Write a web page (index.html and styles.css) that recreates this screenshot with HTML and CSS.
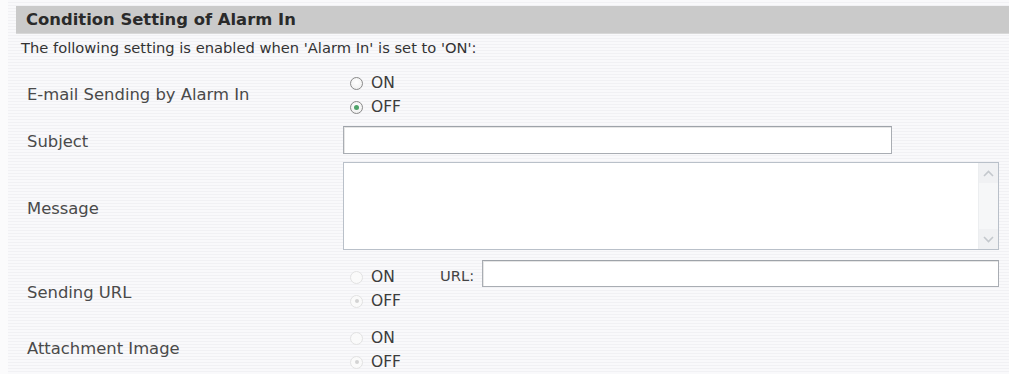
FILE: index.html
```html
<!DOCTYPE html>
<html>
<head>
<meta charset="utf-8">
<link rel="stylesheet" href="styles.css">
</head>
<body>
<div class="page">
  <div class="section-title">Condition Setting of Alarm In</div>
  <div class="note">The following setting is enabled when 'Alarm In' is set to 'ON':</div>

  <div class="row row-email">
    <div class="label">E-mail Sending by Alarm In</div>
    <div class="control">
      <div class="radios">
        <label class="radio"><span class="dot"></span><span>ON</span></label>
        <label class="radio"><span class="dot checked"></span><span>OFF</span></label>
      </div>
    </div>
  </div>

  <div class="row row-subject">
    <div class="label">Subject</div>
    <div class="control">
      <div class="input subject"></div>
    </div>
  </div>

  <div class="row row-message">
    <div class="label">Message</div>
    <div class="control">
      <div class="textarea">
        <div class="ta-body"></div>
        <div class="scrollbar">
          <div class="sb-btn"><svg width="11" height="7" viewBox="0 0 11 7"><path d="M1 6 L5.5 1.5 L10 6" fill="none" stroke="#c4c8cd" stroke-width="1.6"/></svg></div>
          <div class="sb-track"></div>
          <div class="sb-btn"><svg width="11" height="7" viewBox="0 0 11 7"><path d="M1 1 L5.5 5.5 L10 1" fill="none" stroke="#c4c8cd" stroke-width="1.6"/></svg></div>
        </div>
      </div>
    </div>
  </div>

  <div class="row row-url">
    <div class="label">Sending URL</div>
    <div class="control url-control">
      <div class="radios fixed">
        <label class="radio"><span class="dot disabled"></span><span>ON</span></label>
        <label class="radio"><span class="dot disabled checked-dis"></span><span>OFF</span></label>
      </div>
      <div class="url-label">URL:</div>
      <div class="input url"></div>
    </div>
  </div>

  <div class="row row-attach">
    <div class="label">Attachment Image</div>
    <div class="control">
      <div class="radios">
        <label class="radio"><span class="dot disabled"></span><span>ON</span></label>
        <label class="radio"><span class="dot disabled checked-dis"></span><span>OFF</span></label>
      </div>
    </div>
  </div>
</div>
</body>
</html>
```

FILE: styles.css
```css
html, body {
  margin: 0;
  padding: 0;
}
body {
  background: #fbfbfc;
  font-family: "DejaVu Sans", Verdana, sans-serif;
  color: #444;
  width: 1009px;
  height: 374px;
  overflow: hidden;
}
.page {
  padding-top: 6px;
  background-color: #f7f7f9;
  background-image: repeating-linear-gradient(to bottom, #f9f9fb 0px, #f9f9fb 2px, #f1f1f4 2px, #f1f1f4 3px);
  height: 368px;
  margin-left: 8px;
}
.section-title {
  margin-left: 8px;
  height: 27px;
  background: #cacaca;
  border-bottom: 1px solid #d8d8d8;
  display: flex;
  align-items: center;
  padding-left: 10px;
  font-weight: bold;
  font-size: 16.4px;
  color: #2a2a2a;
}
.note {
  padding-left: 13px;
  height: 27px;
  line-height: 27px;
  font-size: 14.7px;
  color: #333;
}
.row {
  display: grid;
  grid-template-columns: 335px 1fr;
}
.label {
  padding-left: 19px;
  font-size: 16.4px;
  color: #4a4a4a;
  align-self: center;
}
.control {
  padding-right: 10px;
}
.row-email { height: 60px; }
.row-email .label { padding-top: 6px; }
.row-email .radios { padding-top: 10px; }

.row-subject { height: 37px; }
.row-subject .label { padding-top: 4px; }
.row-subject .input { margin-top: 5px; }

.row-message { height: 98px; }
.row-message .label { padding-top: 2px; }
.row-message .textarea { margin-top: 4px; }

.row-url { height: 58px; }
.row-url .label { padding-top: 14px; }
.row-url .radios { padding-top: 9px; }

.row-attach { height: 60px; }
.row-attach .label { padding-top: 8px; }
.row-attach .radios { padding-top: 12px; }

.radios {
  display: flex;
  flex-direction: column;
}
.radios.fixed {
  width: 97px;
  flex: none;
}
.radio {
  display: flex;
  align-items: center;
  height: 24px;
  padding-left: 7px;
  gap: 8px;
  font-family: "DejaVu Sans", Tahoma, sans-serif;
  font-size: 15.5px;
  color: #3c3c3c;
}
.dot {
  width: 11px;
  height: 11px;
  border-radius: 50%;
  border: 1px solid #8a8a8a;
  background: radial-gradient(circle at 50% 40%, #ffffff 0%, #ececec 100%);
  display: flex;
  align-items: center;
  justify-content: center;
  flex: none;
}
.dot.checked::after {
  content: "";
  width: 5px;
  height: 5px;
  border-radius: 50%;
  background: #4fa36a;
}
.dot.disabled {
  border-color: #e2e2e2;
  background: #fafafa;
}
.dot.checked-dis::after {
  content: "";
  width: 4px;
  height: 4px;
  border-radius: 50%;
  background: #d3d3d3;
}
.input {
  box-sizing: border-box;
  background: #fff;
  border: 1px solid #a9adb3;
  border-top-color: #9ea3a9;
  box-shadow: inset 1px 1px 0 #e6e6e6;
}
.input.subject {
  width: 549px;
  height: 28px;
}
.textarea {
  box-sizing: border-box;
  height: 88px;
  border: 1px solid #b9c0c9;
  background: #fff;
  display: flex;
}
.ta-body {
  flex: 1;
}
.scrollbar {
  width: 19px;
  display: flex;
  flex-direction: column;
  background: #f6f7f8;
  border-left: 1px solid #eceef0;
}
.sb-btn {
  height: 20px;
  display: flex;
  align-items: center;
  justify-content: center;
  background: #f0f1f3;
}
.sb-track {
  flex: 1;
}
.url-control {
  display: flex;
  align-items: flex-start;
}
.url-label {
  font-size: 14.7px;
  color: #444;
  padding-top: 11px;
  width: 42px;
  flex: none;
}
.input.url {
  flex: 1;
  height: 27px;
  margin-top: 4px;
}
```
